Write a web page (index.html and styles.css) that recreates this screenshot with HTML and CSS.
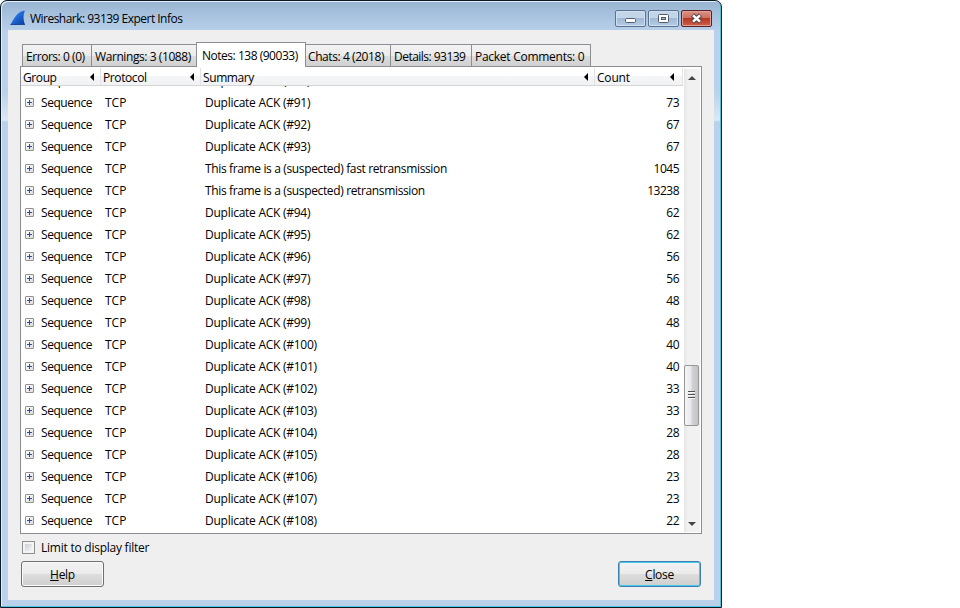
FILE: index.html
```
<!DOCTYPE html>
<html lang="en">
<head>
<meta charset="utf-8">
<title>Wireshark: 93139 Expert Infos</title>
<link rel="stylesheet" href="styles.css">
</head>
<body>
<div class="window">
  <header class="titlebar">
    <svg class="logo" width="16" height="16" viewBox="0 0 16 16"><defs><linearGradient id="fin" x1="0" y1="0" x2="1" y2="1"><stop offset="0" stop-color="#5aa5f5"/><stop offset=".5" stop-color="#1c66d4"/><stop offset="1" stop-color="#0b3a9c"/></linearGradient></defs><path d="M.5 14.500C2.500 11.500 4 7.500 7 4.500 9 2.300 12 .8 15 .5 13.400 3.500 12.800 9 15 14.500Z" fill="url(#fin)"/><path d="M.5 14.500H15" stroke="#1b4899"/></svg>
    <h1>Wireshark: 93139 Expert Infos</h1>
    <div class="controls">
      <span class="control"><svg width="29" height="15" viewBox="0 0 29 15"><rect x="9.500" y="7.500" width="10" height="4" rx="1" fill="#fff" stroke="#535a6b"/></svg></span>
      <span class="control"><svg width="29" height="15" viewBox="0 0 29 15"><rect x="9.500" y="3.500" width="10" height="8" rx="1" fill="#fff" stroke="#535a6b"/><rect x="12.500" y="6.500" width="4" height="2" fill="#9bb5d2" stroke="#535a6b"/></svg></span>
      <span class="control close"><svg width="29" height="15" viewBox="0 0 29 15"><path d="M10.500 4l8 7M18.500 4l-8 7" stroke="#574650" stroke-width="4.600"/><path d="M11 4.400l7 6.200M18 4.400l-7 6.200" stroke="#fff" stroke-width="2.500"/></svg></span>
    </div>
  </header>
  <main class="client">
    <nav class="tabs">
      <span class="tab errors">Errors: 0 (0)</span><span class="tab warnings">Warnings: 3 (1088)</span><span class="tab active">Notes: 138 (90033)</span><span class="tab chats">Chats: 4 (2018)</span><span class="tab details">Details: 93139</span><span class="tab comments">Packet Comments: 0</span>
    </nav>
    <section class="pane">
      <div class="table">
        <div class="head"><span>Group</span><span>Protocol</span><span>Summary</span><span>Count</span></div>
        <div class="rows">
          <div class="row"><i></i><b>Sequence</b><b>TCP</b><b>Duplicate ACK (#90)</b><b></b></div>
          <div class="row"><i></i><b>Sequence</b><b>TCP</b><b>Duplicate ACK (#91)</b><b>73</b></div>
          <div class="row"><i></i><b>Sequence</b><b>TCP</b><b>Duplicate ACK (#92)</b><b>67</b></div>
          <div class="row"><i></i><b>Sequence</b><b>TCP</b><b>Duplicate ACK (#93)</b><b>67</b></div>
          <div class="row long"><i></i><b>Sequence</b><b>TCP</b><b>This frame is a (suspected) fast retransmission</b><b>1045</b></div>
          <div class="row long"><i></i><b>Sequence</b><b>TCP</b><b>This frame is a (suspected) retransmission</b><b>13238</b></div>
          <div class="row"><i></i><b>Sequence</b><b>TCP</b><b>Duplicate ACK (#94)</b><b>62</b></div>
          <div class="row"><i></i><b>Sequence</b><b>TCP</b><b>Duplicate ACK (#95)</b><b>62</b></div>
          <div class="row"><i></i><b>Sequence</b><b>TCP</b><b>Duplicate ACK (#96)</b><b>56</b></div>
          <div class="row"><i></i><b>Sequence</b><b>TCP</b><b>Duplicate ACK (#97)</b><b>56</b></div>
          <div class="row"><i></i><b>Sequence</b><b>TCP</b><b>Duplicate ACK (#98)</b><b>48</b></div>
          <div class="row"><i></i><b>Sequence</b><b>TCP</b><b>Duplicate ACK (#99)</b><b>48</b></div>
          <div class="row"><i></i><b>Sequence</b><b>TCP</b><b>Duplicate ACK (#100)</b><b>40</b></div>
          <div class="row"><i></i><b>Sequence</b><b>TCP</b><b>Duplicate ACK (#101)</b><b>40</b></div>
          <div class="row"><i></i><b>Sequence</b><b>TCP</b><b>Duplicate ACK (#102)</b><b>33</b></div>
          <div class="row"><i></i><b>Sequence</b><b>TCP</b><b>Duplicate ACK (#103)</b><b>33</b></div>
          <div class="row"><i></i><b>Sequence</b><b>TCP</b><b>Duplicate ACK (#104)</b><b>28</b></div>
          <div class="row"><i></i><b>Sequence</b><b>TCP</b><b>Duplicate ACK (#105)</b><b>28</b></div>
          <div class="row"><i></i><b>Sequence</b><b>TCP</b><b>Duplicate ACK (#106)</b><b>23</b></div>
          <div class="row"><i></i><b>Sequence</b><b>TCP</b><b>Duplicate ACK (#107)</b><b>23</b></div>
          <div class="row"><i></i><b>Sequence</b><b>TCP</b><b>Duplicate ACK (#108)</b><b>22</b></div>
        </div>
      </div>
      <div class="scrollbar">
        <svg class="up" width="8" height="4" viewBox="0 0 8 4"><path d="M0 4L4 0 8 4Z" fill="#444"/></svg>
        <div class="thumb"><span class="grip"></span></div>
        <svg class="down" width="8" height="4" viewBox="0 0 8 4"><path d="M0 0H8L4 4Z" fill="#444"/></svg>
      </div>
    </section>
    <label class="filter"><span class="box"></span><span>Limit to display filter</span></label>
    <footer class="actions">
      <button class="button"><u>H</u>elp</button>
      <button class="button default"><u>C</u>lose</button>
    </footer>
  </main>
</div>
</body>
</html>
```
FILE: styles.css
```
* { box-sizing: border-box; }
body {
  margin: 0;
  width: 960px;
  height: 608px;
  overflow: hidden;
  background: #fff;
  color: #000;
  font: 12px/16px "Open Sans", "Noto Sans", sans-serif;
  letter-spacing: -0.3px;
}
.window {
  width: 722px;
  height: 608px;
  border: 1px solid #0b1a24;
  border-radius: 7px 7px 0 0;
  padding: 0 6px 6px;
  box-shadow: inset -1px -1px #4fc3dc, inset 1px 1px #e3eefa;
  background: linear-gradient(#98b4d2, #a9c3df 15px, #b9d1ea 31px, #b9d1ea 90px, #dbe8f5 119px, #b9d1ea 121px, #b9d1ea);
}
.titlebar { height: 29px; display: flex; align-items: flex-start; padding: 0 3px; }
.logo { margin-top: 9px; }
h1 { margin: 10px 0 0 4px; font: inherit; letter-spacing: -0.52px; }
.controls { margin-left: auto; margin-top: 9px; display: flex; gap: 2px; }
.control {
  width: 31px;
  height: 17px;
  border: 1px solid #5c7390;
  border-radius: 2px;
  box-shadow: inset 0 0 0 1px #d0e0f0;
  background: linear-gradient(#c3d5e9 50%, #9fb9d6 50%, #b5cce4);
}
.control svg { display: block; }
.close { border-color: #5b2022; box-shadow: inset 0 0 0 1px #e0a298; background: linear-gradient(#dc9386, #cf6e5d 48%, #b83622 50%, #cf6049); }
.client { margin-left: 1px; width: 706px; height: 570px; background: #efefef; padding: 12px 13px 0 12px; }
.tabs { display: flex; height: 24px; align-items: flex-end; padding-left: 2px; }
.tab {
  height: 22px;
  border: 1px solid #8b8e94;
  border-bottom: 0;
  margin-right: -1px;
  padding: 4px 0 0 3px;
  white-space: nowrap;
  letter-spacing: -0.4px;
  background: linear-gradient(#f2f2f2, #ececec 50%, #dedede 51%, #d0d0d0);
}
.errors { width: 70px; letter-spacing: -0.45px; }
.warnings { width: 106px; letter-spacing: -0.42px; }
.active { width: 110px; height: 25px; padding: 5px 0 0 5px; margin-bottom: -1px; position: relative; background: #fff; letter-spacing: -0.48px; }
.chats { width: 86px; padding-left: 2px; letter-spacing: -0.42px; }
.details { width: 82px; letter-spacing: -0.52px; }
.comments { width: 120px; letter-spacing: -0.27px; }
.pane { display: flex; height: 468px; width: 682px; border: 1px solid #8b8e94; background: #fff; }
.table { width: 662px; overflow: hidden; }
.head { display: grid; grid-template-columns: 80px 100px 394px 88px; height: 18px; margin-top: 1px; border-bottom: 1px solid #d5d5d5; background: linear-gradient(#fff 45%, #f4f5f7 46%, #f1f2f4); }
.head span { position: relative; height: 17px; padding: 2px 0 0 2px; border-right: 1px solid #e2e3e5; letter-spacing: -0.4px; }
.head span::after { content: ""; position: absolute; right: 6px; top: 5px; border: solid transparent; border-width: 4px 4px 4px 0; border-right-color: #000; }
.head span:last-child { letter-spacing: -0.2px; }
.head span:last-child::after { right: 8px; }
.rows { height: 447px; overflow: hidden; }
.row { display: grid; grid-template-columns: 20px 64px 100px 394px 80px; height: 22px; align-items: center; }
.row:first-child { margin-top: -16px; }
.row b { font-weight: 400; white-space: nowrap; }
.row b:nth-of-type(1) { letter-spacing: -0.43px; }
.row b:nth-of-type(2) { letter-spacing: 0; }
.row b:nth-of-type(3) { letter-spacing: -0.26px; }
.long b:nth-of-type(3) { letter-spacing: -0.36px; }
.row b:last-child { text-align: right; letter-spacing: -0.5px; }
.row i {
  width: 9px; height: 9px; margin: 0 0 1px 4px;
  border: 1px solid #919191; border-radius: 1px;
  background: linear-gradient(#344b94, #344b94) center / 5px 1px no-repeat, linear-gradient(#344b94, #344b94) center / 1px 5px no-repeat, linear-gradient(135deg, #fff, #ddd);
}
.scrollbar { width: 16px; margin: 2px 0 1px 1px; background: linear-gradient(90deg, #e6e6e6, #f1f1f1 25%, #f1f1f1); display: flex; flex-direction: column; align-items: center; }
.up { margin-top: 7px; }
.thumb { width: 15px; height: 61px; margin: 285px 1px 0 0; border: 1px solid #979797; border-radius: 2px; background: linear-gradient(90deg, #f5f5f5, #e9e9eb 48%, #d2d3d6 52%, #c2c3c7); display: flex; align-items: center; justify-content: center; }
.grip { width: 7px; height: 9px; margin-right: 1px; background: repeating-linear-gradient(#505050 0 1px, #f6f6f6 1px 2px, transparent 2px 3px); }
.down { margin-top: auto; margin-bottom: 6px; }
.filter { display: flex; align-items: center; height: 16px; margin: 6px 0 0 2px; letter-spacing: -0.24px; }
.box { width: 13px; height: 13px; margin: 0 6px 1px 0; border: 1px solid #8e8f8f; background: linear-gradient(135deg, #cbcfd5, #f6f6f6) content-box, #f4f4f4; padding: 2px; }
.actions { display: flex; justify-content: space-between; margin: 5px 0 0 1px; width: 680px; }
.button { width: 83px; height: 26px; padding: 2px 0 0; border: 1px solid #707070; border-radius: 3px; color: #000; font: inherit; letter-spacing: inherit; box-shadow: inset 0 0 0 1px #fafafa; background: linear-gradient(#f2f2f2, #ebebeb 49%, #dddddd 50%, #cfcfcf); }
.default { border-color: #3c7fb1; box-shadow: inset 0 0 0 1px #48c8ea; }
```
